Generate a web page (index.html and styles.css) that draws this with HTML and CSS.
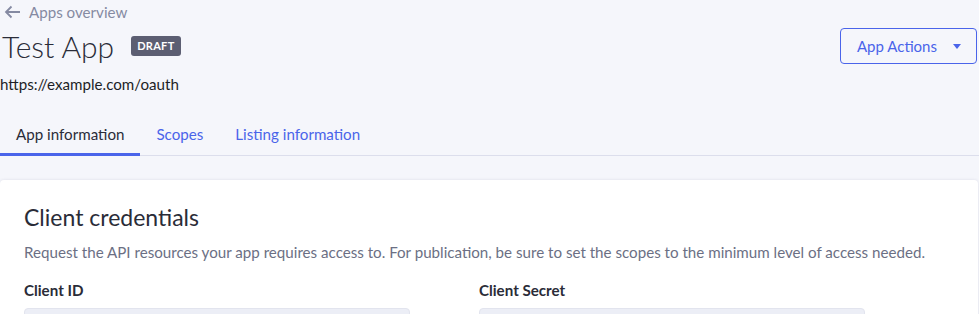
FILE: index.html
```html
<!DOCTYPE html>
<html lang="en">
<head>
    <meta charset="UTF-8">
    <meta name="viewport" content="width=device-width, initial-scale=1.0">
    <title>Test App</title>
    <link rel="stylesheet" href="styles.css">
</head>
<body>
    <!-- Page header -->
    <header class="page-header">
        <a class="back-link" href="#">
            <svg width="17" height="14" viewBox="0 0 17 14" aria-hidden="true">
                <path d="M16 7H2M7.5 1.5L2 7l5.5 5.5" fill="none" stroke="currentColor" stroke-width="1.8"/>
            </svg>
            Apps overview
        </a>
        <div class="title-row">
            <div class="title-block">
                <h1>Test App <span class="badge">DRAFT</span></h1>
                <p class="app-url">https://example.com/oauth</p>
            </div>
            <button class="actions-button" type="button">
                App Actions
                <svg width="8" height="5" viewBox="0 0 8 5" aria-hidden="true"><path d="M0 0h8L4 5z" fill="currentColor"/></svg>
            </button>
        </div>
    </header>

    <!-- Tabs -->
    <nav class="tabs">
        <a class="tab active" href="#">App information</a>
        <a class="tab" href="#">Scopes</a>
        <a class="tab" href="#">Listing information</a>
    </nav>

    <!-- Credentials card -->
    <main class="card">
        <h2>Client credentials</h2>
        <p class="card-desc">Request the API resources your app requires access to. For publication, be sure to set the scopes to the minimum level of access needed.</p>
        <div class="fields">
            <div class="field">
                <label>Client ID</label>
                <div class="field-input"></div>
            </div>
            <div class="field">
                <label>Client Secret</label>
                <div class="field-input"></div>
            </div>
        </div>
    </main>
</body>
</html>
```

FILE: styles.css
```css
/* General page */
body {
    margin: 0;
    font-family: Lato, "Noto Sans", sans-serif;
    font-size: 15.15px;
    color: #222430;
    background-color: #f5f6fb;
    overflow: hidden;
}

/* Header */
.page-header {
    padding: 0 2px;
}

.back-link {
    display: flex;
    align-items: center;
    gap: 8px;
    height: 24px;
    padding-left: 2px;
    color: #858aa2;
    text-decoration: none;
}

.title-row {
    display: flex;
    justify-content: space-between;
    align-items: flex-start;
}

.title-block h1 {
    display: flex;
    align-items: center;
    gap: 17px;
    margin: 4px 0 0;
    font-size: 30px;
    font-weight: 300;
    line-height: 36px;
    color: #2a2c38;
}

.badge {
    padding: 2px 6px;
    border-radius: 3px;
    background-color: #5c5e72;
    color: #fff;
    font-size: 11px;
    font-weight: 700;
    line-height: 16px;
    letter-spacing: 0.3px;
}

.app-url {
    margin: 10px 0 0 -2px;
    line-height: 20px;
    color: #1d1e26;
}

.actions-button {
    display: flex;
    align-items: center;
    gap: 16px;
    margin-top: 4px;
    height: 36px;
    padding: 0 15px 0 16px;
    border: 1px solid #4a64ea;
    border-radius: 4px;
    background: transparent;
    color: #4a64ea;
    font-family: inherit;
    font-size: 15px;
}

/* Tabs */
.tabs {
    display: flex;
    margin-top: 25px;
    border-bottom: 1px solid #dcdeec;
}

.tab {
    padding: 6px 16px 10px;
    color: #4a64ea;
    text-decoration: none;
    border-bottom: 3px solid transparent;
    margin-bottom: -1px;
}

.tab.active {
    color: #2a2c38;
    border-bottom-color: #4a64ea;
}

/* Card */
.card {
    margin: 24px 1px 0 0;
    padding: 22px 24px 0;
    background-color: #fff;
    border-radius: 4px;
    box-shadow: 0 0 3px rgba(40, 44, 80, 0.12);
    height: 140px;
}

.card h2 {
    margin: 0;
    font-size: 23px;
    font-weight: 400;
    line-height: 30px;
    color: #2a2c38;
}

.card-desc {
    margin: 10px 0 0;
    color: #6b6f84;
    line-height: 20px;
}

.fields {
    display: grid;
    grid-template-columns: 386px 386px;
    column-gap: 69px;
    margin-top: 18px;
}

.field label {
    display: block;
    font-weight: 700;
    line-height: 20px;
    color: #2a2c38;
}

.field-input {
    margin-top: 8px;
    height: 36px;
    border-radius: 4px;
    background-color: #eceef6;
    border: 1px solid #e2e4ee;
}
```
